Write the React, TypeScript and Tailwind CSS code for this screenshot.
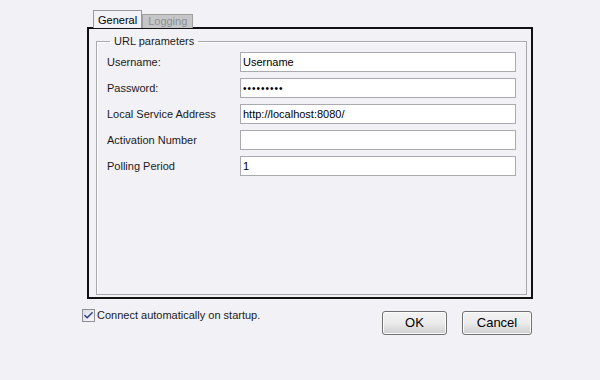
import { Check } from 'lucide-react';

const fields = [
  { label: 'Username:', value: 'Username' },
  { label: 'Password:', value: '•••••••••', password: true },
  { label: 'Local Service Address', value: 'http://localhost:8080/' },
  { label: 'Activation Number', value: '' },
  { label: 'Polling Period', value: '1' },
];

function Field({ label, value, password }: { label: string; value: string; password?: boolean }) {
  return (
    <div className="flex items-center h-5">
      <span className="w-[133px] text-[11px] text-[#1a1a1a]">{label}</span>
      <div className="w-[276px] h-5 bg-white border border-[#a9abb1] flex items-center pl-[2px] text-[11px] text-black">
        {password ? <span className="tracking-[1px] text-[10px]">{value}</span> : value}
      </div>
    </div>
  );
}

function WinButton({ children }: { children: string }) {
  return (
    <button className="h-6 rounded-[3px] border border-[#707070] bg-gradient-to-b from-[#f2f2f2] via-[#ebebeb] to-[#cfcfcf] text-[13px] text-black shadow-[inset_0_0_0_1px_#fcfcfc]">
      {children}
    </button>
  );
}

export default function App() {
  return (
    <div className="w-[600px] h-[380px] bg-[#f2f1f6] pt-[11px] pl-[87px] font-['Liberation_Sans',Arial,sans-serif] select-none">
      <div className="flex items-end h-[17px] relative z-10 -mb-[1px]">
        <div className="ml-[6px] h-[18px] px-[4px] pt-[1px] bg-[#f2f1f6] border border-b-0 border-[#9a9a9a] text-[11px] text-black">
          General
        </div>
        <div className="h-[14px] px-[5px] bg-[#c6c6c8] border border-b-0 border-[#a0a0a0] text-[11px] leading-[13px] text-[#8e8e92]">
          Logging
        </div>
      </div>
      <div className="w-[446px] h-[272px] border-2 border-[#111] pl-[7px] pr-[5px]">
        <fieldset className="border border-[#a7a9ad] h-[261px] mt-[5px] px-[10px] shadow-[inset_1px_1px_0_#fff]">
          <legend className="ml-[3px] px-[4px] text-[11px] text-[#1a1a1a] leading-[14px]">URL parameters</legend>
          <div className="flex flex-col gap-[6px] mt-[4px]">
            {fields.map((f) => (
              <Field key={f.label} {...f} />
            ))}
          </div>
        </fieldset>
      </div>
      <div className="flex items-start -ml-[5px] mt-[10px]">
        <div className="flex items-center gap-[2px]">
          <div className="w-[13px] h-[13px] border border-[#8f8f98] bg-gradient-to-br from-[#dcdde6] to-[#f6f6f9] flex items-center justify-center">
            <Check size={11} strokeWidth={3} className="text-[#2a3a8c]" />
          </div>
          <span className="text-[11px] text-[#1a1a1a] leading-[13px]">Connect automatically on startup.</span>
        </div>
        <div className="ml-auto mr-[68px] mt-[2px] flex gap-[15px]">
          <div className="w-[65px] flex flex-col"><WinButton>OK</WinButton></div>
          <div className="w-[70px] flex flex-col"><WinButton>Cancel</WinButton></div>
        </div>
      </div>
    </div>
  );
}
